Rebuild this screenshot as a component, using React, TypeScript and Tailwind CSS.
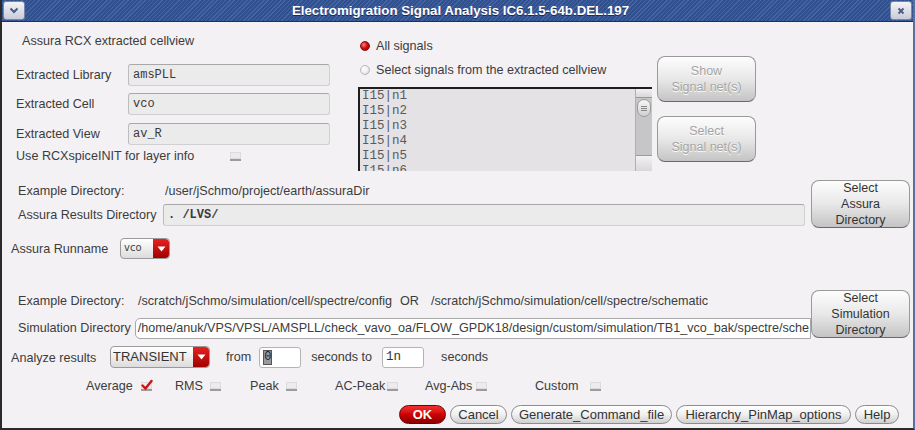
import React from 'react'

const Field = ({ value, w, mono = true, bold = false }: { value: string; w: string; mono?: boolean; bold?: boolean }) => (
  <div
    className={`${w} h-[22px] bg-[#ebebeb] border border-[#d0d0d0] border-t-[#a8a8a8] border-l-[#bcbcbc] rounded-[3px] flex items-center pl-[4px] overflow-hidden whitespace-nowrap ${
      mono ? "font-['Liberation_Mono',monospace] text-[12px] text-[#3a3a3a]" : ''
    } ${bold ? 'font-bold' : ''}`}
  >
    {value}
  </div>
)

const Check = ({ checked = false }: { checked?: boolean }) => (
  <div className="relative w-[11px] h-[9px] bg-[#ecebee] border-b-2 border-[#9c9c9c] shadow-[inset_0_0_0_1px_#dcdcdc]">
    {checked && (
      <svg className="absolute -top-[3px] left-[0px]" width="12" height="12" viewBox="0 0 12 12">
        <path d="M1.5 6.5 L4.5 9.5 L10.5 2" stroke="#d01010" strokeWidth="2.4" fill="none" strokeLinecap="round" />
      </svg>
    )}
  </div>
)

const Radio = ({ on = false }: { on?: boolean }) => (
  <div
    className={`w-[10px] h-[10px] rounded-full border ${
      on
        ? 'border-[#8a0a0a] bg-[radial-gradient(circle_at_35%_35%,#ff8080_0%,#d01010_45%,#8a0000_100%)]'
        : 'border-[#b8b8b8] bg-[radial-gradient(circle_at_35%_35%,#ffffff_0%,#eeeeee_55%,#c8c8c8_100%)]'
    }`}
  />
)

const RedArrow = () => (
  <div className="w-[16px] h-full bg-gradient-to-b from-[#e82020] to-[#a00000] rounded-r-[4px] flex items-center justify-center">
    <svg width="9" height="6" viewBox="0 0 9 6">
      <path d="M0.5 0.5 L8.5 0.5 L4.5 5.5 Z" fill="#ffffff" />
    </svg>
  </div>
)

const PillButton = ({ label, w }: { label: string; w: string }) => (
  <div
    className={`${w} h-[19px] rounded-full border border-[#8c8c8c] bg-gradient-to-b from-[#ffffff] via-[#f0f0f0] to-[#cfcfcf] flex items-center justify-center text-[13px] text-[#333]`}
  >
    {label}
  </div>
)

const BigButton = ({ lines, disabled = false, h }: { lines: string[]; disabled?: boolean; h: string }) => (
  <div
    className={`w-[99px] ${h} rounded-[8px] border border-[#9a9a9a] border-b-[#6a6a6a] bg-gradient-to-b from-[#fdfdfd] via-[#e8e8e8] to-[#c4c4c4] flex flex-col items-center justify-center leading-[16px] text-[12.5px] ${
      disabled ? 'text-[#a4a4a4] [text-shadow:0_1px_0_#ffffff]' : 'text-[#333]'
    }`}
  >
    {lines.map((l) => (
      <div key={l}>{l}</div>
    ))}
  </div>
)

export default function App() {
  const nets = ['I15|n1', 'I15|n2', 'I15|n3', 'I15|n4', 'I15|n5', 'I15|n6']
  return (
    <div className="w-[915px] h-[430px] bg-[#f3f1f4] font-['Liberation_Sans',Arial,sans-serif] text-[12.6px] text-[#3c3c3c] flex flex-col overflow-hidden border-l-2 border-b-2 border-r-2 border-l-[#2a2a2a] border-b-[#2a2a2a] border-r-[#5a6f9c]">
      {/* Title bar */}
      <div className="h-[22px] shrink-0 flex items-center px-[1px] bg-[repeating-linear-gradient(135deg,#31508e_0px,#31508e_2px,#4464a6_2px,#4464a6_3px)] border-b border-[#1e2f58]">
        <div className="w-[22px] h-[19px] rounded-[3px] bg-gradient-to-b from-[#f4f4f8] to-[#c8ccd8] border border-[#7a86a8] flex items-center justify-center">
          <svg width="10" height="7" viewBox="0 0 10 7">
            <path d="M1.5 1.5 L5 5 L8.5 1.5" stroke="#4a5a80" strokeWidth="2" fill="none" />
          </svg>
        </div>
        <div className="flex-1 text-center text-white font-bold text-[13.3px] pl-[6px] [text-shadow:0_1px_0_#1a2a50]">
          Electromigration Signal Analysis IC6.1.5-64b.DEL.197
        </div>
        <div className="w-[22px] h-[19px] rounded-[3px] bg-gradient-to-b from-[#f4f4f8] to-[#c8ccd8] border border-[#7a86a8] flex items-center justify-center">
          <svg width="8" height="8" viewBox="0 0 8 8">
            <path d="M1.5 1.5 L6.5 6.5 M6.5 1.5 L1.5 6.5" stroke="#4a5a80" strokeWidth="1.8" />
          </svg>
        </div>
      </div>

      {/* Top section */}
      <div className="h-[150px] shrink-0 flex">
        <div className="w-[356px] flex flex-col">
          <div className="mt-[12px] ml-[20px] h-[14px] leading-[14px]">Assura RCX extracted cellview</div>
          <div className="mt-[16px] flex items-center">
            <div className="w-[126px] pl-[14px]">Extracted Library</div>
            <Field value="amsPLL" w="w-[202px]" />
          </div>
          <div className="mt-[7px] flex items-center">
            <div className="w-[126px] pl-[14px]">Extracted Cell</div>
            <Field value="vco" w="w-[202px]" />
          </div>
          <div className="mt-[8px] flex items-center">
            <div className="w-[126px] pl-[14px]">Extracted View</div>
            <Field value="av_R" w="w-[202px]" />
          </div>
          <div className="mt-[4px] h-[14px] flex items-center">
            <div className="w-[228px] pl-[14px]">Use RCXspiceINIT for layer info</div>
            <Check />
          </div>
        </div>

        <div className="flex flex-col">
          <div className="mt-[16px] h-[16px] flex items-center gap-[6px] ml-[2px]">
            <Radio on />
            <span>All signals</span>
          </div>
          <div className="mt-[8px] h-[16px] flex items-center gap-[6px] ml-[2px]">
            <Radio />
            <span>Select signals from the extracted cellview</span>
          </div>
          <div className="mt-[9px] w-[294px] h-[84px] flex bg-[#e4e2e5] border-t-2 border-l-2 border-[#1e1e1e] overflow-hidden">
            <div className="flex-1 font-['Liberation_Mono',monospace] text-[12.5px] leading-[15px] text-[#5a5a5a] pl-[2px]">
              {nets.map((n) => (
                <div key={n}>{n}</div>
              ))}
            </div>
            <div className="w-[17px] flex flex-col bg-[#c6c6c8] border-l border-[#b0b0b0]">
              <div className="h-[9px] bg-gradient-to-b from-[#f2f2f2] to-[#d8d8d8] border-b border-[#9a9a9a]" />
              <div className="mt-[1px] mx-[1px] h-[18px] rounded-[7px] bg-gradient-to-b from-[#f6f6f6] to-[#d0d0d0] border border-[#9a9a9a] flex flex-col items-center justify-center gap-[1px]">
                <div className="w-[6px] h-px bg-[#888]" />
                <div className="w-[6px] h-px bg-[#888]" />
                <div className="w-[6px] h-px bg-[#888]" />
              </div>
              <div className="flex-1" />
              <div className="h-[16px] bg-gradient-to-b from-[#f2f2f2] to-[#d8d8d8] border-t border-[#9a9a9a]" />
            </div>
          </div>
        </div>

        <div className="ml-[5px] mt-[34px] flex flex-col gap-[14px]">
          <BigButton lines={['Show', 'Signal net(s)']} disabled h="h-[46px]" />
          <BigButton lines={['Select', 'Signal net(s)']} disabled h="h-[46px]" />
        </div>
      </div>

      {/* Assura section */}
      <div className="flex shrink-0">
        <div className="w-[809px] flex flex-col">
          <div className="mt-[12px] h-[14px] flex items-center">
            <div className="w-[163px] pl-[16px]">Example Directory:</div>
            <span>/user/jSchmo/project/earth/assuraDir</span>
          </div>
          <div className="mt-[6px] flex items-center">
            <div className="w-[161px] pl-[16px]">Assura Results Directory</div>
            <Field value=". /LVS/" w="w-[642px]" bold />
          </div>
        </div>
        <div className="mt-[8px]">
          <BigButton lines={['Select', 'Assura', 'Directory']} h="h-[48px]" />
        </div>
      </div>

      <div className="mt-[10px] h-[21px] flex items-center shrink-0">
        <div className="w-[118px] pl-[9px] pt-[2px]">Assura Runname</div>
        <div className="w-[50px] h-[21px] flex border border-[#9a9a9a] rounded-[4px] bg-gradient-to-b from-[#ffffff] to-[#dcdcdc]">
          <div className="flex-1 pl-[3px] leading-[17px] font-['DejaVu_Sans',sans-serif] text-[10px] text-[#444]">vco</div>
          <RedArrow />
        </div>
      </div>

      {/* Simulation section */}
      <div className="flex shrink-0">
        <div className="w-[809px] flex flex-col">
          <div className="mt-[35px] h-[14px] flex items-center whitespace-nowrap">
            <div className="w-[136px] pl-[16px]">Example Directory:</div>
            <span>/scratch/jSchmo/simulation/cell/spectre/config</span>
            <span className="ml-[8px]">OR</span>
            <span className="ml-[12px]">/scratch/jSchmo/simulation/cell/spectre/schematic</span>
          </div>
          <div className="mt-[10px] flex items-center">
            <div className="w-[133px] pl-[16px]">Simulation Directory</div>
            <div className="w-[678px] h-[21px] bg-white border border-[#a8a8a8] rounded-l-[5px] flex items-center pl-[2px] overflow-hidden whitespace-nowrap">
              /home/anuk/VPS/VPSL/AMSPLL/check_vavo_oa/FLOW_GPDK18/design/custom/simulation/TB1_vco_bak/spectre/sche
            </div>
          </div>
        </div>
        <div className="mt-[31px] relative">
          <BigButton lines={['Select', 'Simulation', 'Directory']} h="h-[48px]" />
        </div>
      </div>

      <div className="mt-[7px] h-[22px] flex items-center shrink-0 whitespace-nowrap">
        <div className="w-[108px] pl-[9px] pt-[2px]">Analyze results</div>
        <div className="w-[100px] h-[22px] flex border border-[#9a9a9a] rounded-[4px] bg-gradient-to-b from-[#ffffff] to-[#dcdcdc]">
          <div className="flex-1 pl-[2px] leading-[20px] text-[13px] text-[#333]">TRANSIENT</div>
          <RedArrow />
        </div>
        <span className="ml-[16px]">from</span>
        <div className="ml-[8px] w-[42px] h-[21px] bg-white border border-[#b4b4b4] rounded-[3px] flex items-center pl-[3px]">
          <span className="bg-[#9a9a9a] text-[#222] font-['Liberation_Mono',monospace] text-[12px] leading-[13px] border border-[#555]">0</span>
        </div>
        <span className="ml-[10px]">seconds to</span>
        <div className="ml-[10px] w-[42px] h-[21px] bg-white border border-[#b4b4b4] rounded-[3px] flex items-center pl-[3px] font-['Liberation_Mono',monospace] text-[12.5px] text-[#333]">
          1n
        </div>
        <span className="ml-[17px]">seconds</span>
      </div>

      <div className="mt-[11px] h-[14px] flex items-center shrink-0 pl-[84px] whitespace-nowrap">
        <div className="w-[89px] flex items-center">
          <span>Average</span>
          <div className="ml-[8px]"><Check checked /></div>
        </div>
        <div className="w-[75px] flex items-center">
          <span>RMS</span>
          <div className="ml-[7px]"><Check /></div>
        </div>
        <div className="w-[85px] flex items-center">
          <span>Peak</span>
          <div className="ml-[7px]"><Check /></div>
        </div>
        <div className="w-[90px] flex items-center">
          <span>AC-Peak</span>
          <div className="ml-[2px]"><Check /></div>
        </div>
        <div className="w-[110px] flex items-center">
          <span>Avg-Abs</span>
          <div className="ml-[4px]"><Check /></div>
        </div>
        <div className="flex items-center">
          <span>Custom</span>
          <div className="ml-[12px]"><Check /></div>
        </div>
      </div>

      <div className="mt-[12px] h-[19px] flex items-center gap-[4px] pl-[397px] shrink-0 whitespace-nowrap">
        <div className="w-[47px] h-[19px] rounded-full border border-[#700000] bg-gradient-to-b from-[#f03030] via-[#cc0000] to-[#8a0000] flex items-center justify-center text-white font-bold text-[13px]">
          OK
        </div>
        <PillButton label="Cancel" w="w-[57px]" />
        <PillButton label="Generate_Command_file" w="w-[161px]" />
        <PillButton label="Hierarchy_PinMap_options" w="w-[175px]" />
        <PillButton label="Help" w="w-[44px]" />
      </div>
    </div>
  )
}
